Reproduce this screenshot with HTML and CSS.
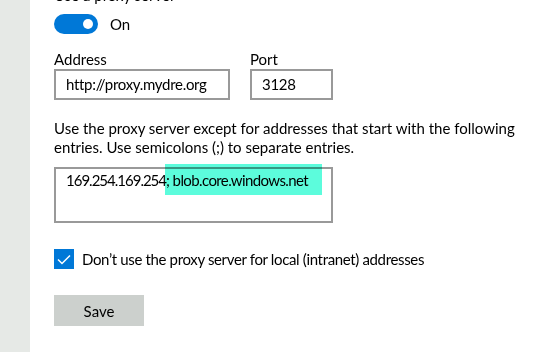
FILE: index.html
```html
<!DOCTYPE html>
<html>
<head>
    <title>Proxy</title>
    <link rel="stylesheet" href="styles.css">
</head>
<body>
    <div class="sidebar"></div>

    <div class="content">
        <div class="heading">Use a proxy server</div>

        <div class="toggle-row">
            <div class="toggle"><span class="thumb"></span></div>
            <span>On</span>
        </div>

        <div class="fields">
            <div class="field">
                <label>Address</label>
                <div class="input address">http://proxy.mydre.org</div>
            </div>
            <div class="field">
                <label>Port</label>
                <div class="input port">3128</div>
            </div>
        </div>

        <p class="note">Use the proxy server except for addresses that start with the following entries. Use semicolons (;) to separate entries.</p>

        <div class="textarea">169.254.169.254<span class="selected">; blob.core.windows.net</span></div>

        <div class="check-row">
            <div class="checkbox">
                <svg width="20" height="20" viewBox="0 0 20 20">
                    <path d="M4 10.5 L8 14.5 L16 6.5" fill="none" stroke="#fff" stroke-width="1.5"/>
                </svg>
            </div>
            <span class="check-label">Don’t use the proxy server for local (intranet) addresses</span>
        </div>

        <button class="save">Save</button>
    </div>
</body>
</html>
```

FILE: styles.css
```css
body { margin: 0; display: flex; font-family: Lato, sans-serif; font-size: 15px; color: #000; background: #fff; height: 352px; overflow: hidden; }
.sidebar { width: 30px; background: #e6e9e6; flex-shrink: 0; }
.content { padding-left: 24px; line-height: 20px; }
.heading { margin-top: -15px; }
.toggle-row { display: flex; align-items: center; gap: 12px; margin-top: 9px; }
.toggle { width: 44px; height: 20px; border-radius: 10px; background: #0078d7; position: relative; }
.thumb { position: absolute; left: 29px; top: 5px; width: 10px; height: 10px; border-radius: 50%; background: #fff; }
.fields { display: flex; gap: 20px; margin-top: 15px; }
.field label { display: block; margin-bottom: 0; }
.input { box-sizing: border-box; height: 31px; border: 2px solid #999; padding: 3px 10px; white-space: nowrap; }
.address { width: 176px; letter-spacing: -0.3px; }
.port { width: 83px; letter-spacing: -0.3px; }
.note { margin: 19px 0 10px; width: 480px; line-height: 19px; }
.textarea { box-sizing: border-box; width: 279px; height: 56px; border: 2px solid #999; padding: 1px 10px; white-space: nowrap; letter-spacing: -1px; }
.selected { position: relative; letter-spacing: -0.6px; }
.selected::after { content: ""; position: absolute; left: -1px; right: -14px; top: -7px; height: 31px; background: #5cfcdc; mix-blend-mode: multiply; }
.check-row { display: flex; align-items: center; gap: 8px; margin-top: 26px; }
.checkbox { width: 20px; height: 20px; background: #0078d7; }
.checkbox svg { display: block; }
.check-label { letter-spacing: -0.35px; }
.save { margin-top: 26px; width: 90px; height: 31px; border: none; background: #ccd0cd; font-family: inherit; font-size: 15px; color: #000; padding: 0; }
```
